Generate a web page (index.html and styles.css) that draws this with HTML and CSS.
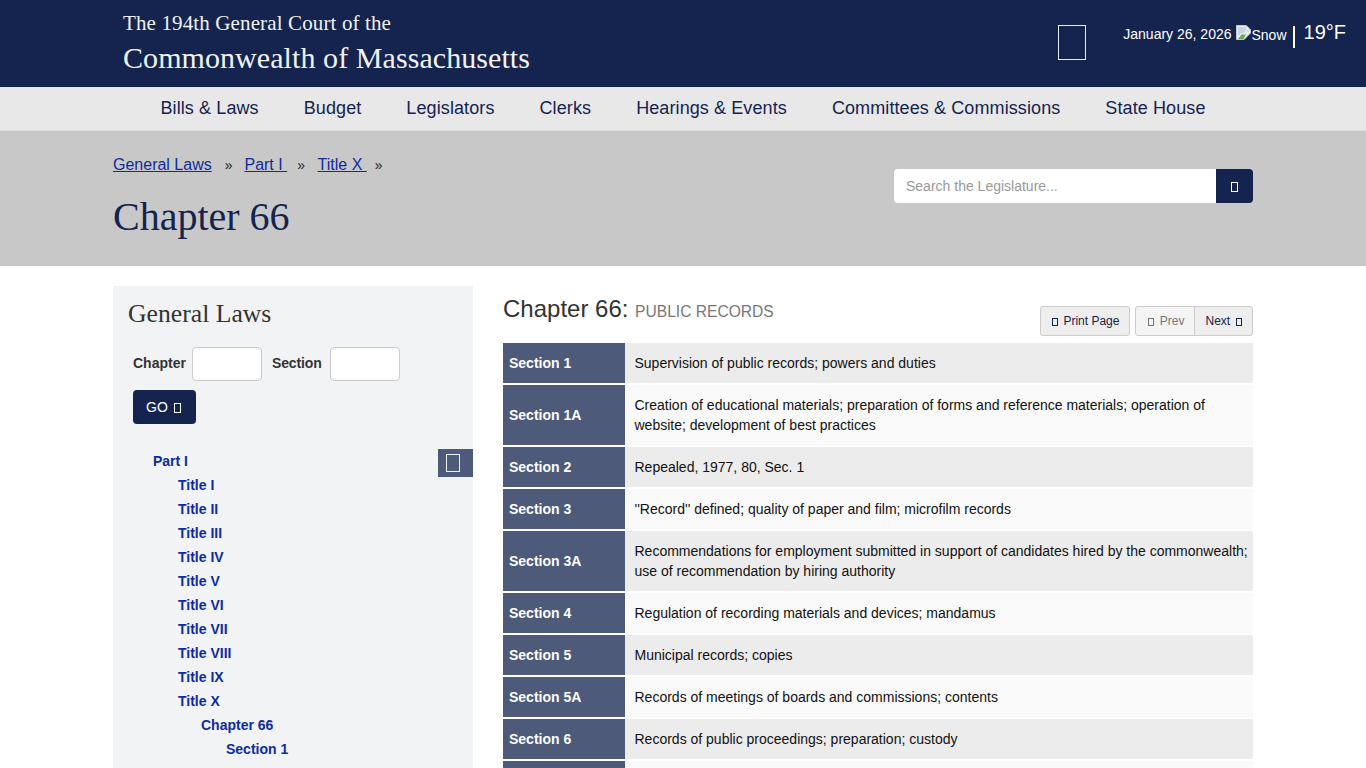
FILE: index.html
```html
<!DOCTYPE html>
<html lang="en">

<head>
    <meta charset="UTF-8">
    <meta name="viewport" content="width=device-width, initial-scale=1.0">
    <title>General Laws - Chapter 66</title>
    <link rel="stylesheet" href="styles.css">
</head>

<body>
    <!-- Header -->
    <header class="top">
        <div class="brand">
            <div class="brand-small">The 194th General Court of the</div>
            <div class="brand-big">Commonwealth of Massachusetts</div>
        </div>
        <div class="top-right">
            <span class="box box-menu"></span>
            <div class="weather">
                <span class="date">January 26, 2026</span>
                <svg class="broken-img" width="16" height="16" viewBox="0 0 16 16">
                    <path d="M.5 .5h9.500l4.500 4.500v3l-6.500 6.500H.5z" fill="#eef1f4" stroke="#c3c7cc"/>
                    <path d="M2 2h7v4h4v1.500L10 6 7 9 5 8l-3 3z" fill="#c4d3ea"/>
                    <path d="M2 14l4-5 2 1 2.500-2L7.500 14z" fill="#6aa84a"/>
                    <path d="M10 .5V5h4.500z" fill="#fff" stroke="#c3c7cc"/>
                </svg><span class="snow">Snow</span>
                <span class="divider"></span>
                <span class="temp">19°F</span>
            </div>
        </div>
    </header>

    <!-- Main nav -->
    <nav class="mainnav">
        <a href="#">Bills &amp; Laws</a>
        <a href="#">Budget</a>
        <a href="#">Legislators</a>
        <a href="#">Clerks</a>
        <a href="#">Hearings &amp; Events</a>
        <a href="#">Committees &amp; Commissions</a>
        <a href="#">State House</a>
    </nav>

    <!-- Title band -->
    <div class="band">
        <div class="band-inner">
            <div>
                <div class="crumbs">
                    <a href="#" class="crumb-first">General Laws</a><span class="sep sep-first">»</span>
                    <a href="#">Part I&nbsp;</a><span class="sep">»</span>
                    <a href="#">Title X&nbsp;</a><span class="sep sep-last">»</span>
                </div>
                <h1>Chapter 66</h1>
            </div>
            <form class="search">
                <input type="text" placeholder="Search the Legislature...">
                <button type="button"><span class="box"></span></button>
            </form>
        </div>
    </div>

    <div class="content">
        <!-- Sidebar -->
        <aside class="side">
            <h2>General Laws</h2>
            <form class="jump">
                <label for="chapter">Chapter</label>
                <input type="text" id="chapter">
                <label for="section" class="label-section">Section</label>
                <input type="text" id="section">
                <button type="button" class="go">GO <span class="box"></span></button>
            </form>
            <div class="tree-toggle"><span class="box"></span></div>
            <ul class="tree">
                <li><a href="#">Part I</a>
                    <ul>
                        <li><a href="#">Title I</a></li>
                        <li><a href="#">Title II</a></li>
                        <li><a href="#">Title III</a></li>
                        <li><a href="#">Title IV</a></li>
                        <li><a href="#">Title V</a></li>
                        <li><a href="#">Title VI</a></li>
                        <li><a href="#">Title VII</a></li>
                        <li><a href="#">Title VIII</a></li>
                        <li><a href="#">Title IX</a></li>
                        <li><a href="#">Title X</a>
                            <ul class="chapters">
                                <li><a href="#">Chapter 66</a>
                                    <ul>
                                        <li><a href="#">Section 1</a></li>
                                    </ul>
                                </li>
                            </ul>
                        </li>
                    </ul>
                </li>
            </ul>
        </aside>

        <!-- Section list -->
        <main class="main">
            <div class="main-head">
                <h2>Chapter 66: <small>PUBLIC RECORDS</small></h2>
                <div class="tools">
                    <a href="#" class="tool print"><span class="box"></span> Print Page</a>
                    <div class="pager">
                        <a href="#" class="tool prev off"><span class="box"></span> Prev</a>
                        <a href="#" class="tool next">Next <span class="box"></span></a>
                    </div>
                </div>
            </div>
            <div class="rows">
                <a href="#" class="row"><span class="sec">Section 1</span><span class="desc">Supervision of public records; powers and duties</span></a>
                <a href="#" class="row"><span class="sec">Section 1A</span><span class="desc">Creation of educational materials; preparation of forms and reference materials; operation of website; development of best practices</span></a>
                <a href="#" class="row"><span class="sec">Section 2</span><span class="desc">Repealed, 1977, 80, Sec. 1</span></a>
                <a href="#" class="row"><span class="sec">Section 3</span><span class="desc">''Record'' defined; quality of paper and film; microfilm records</span></a>
                <a href="#" class="row"><span class="sec">Section 3A</span><span class="desc">Recommendations for employment submitted in support of candidates hired by the commonwealth; use of recommendation by hiring authority</span></a>
                <a href="#" class="row"><span class="sec">Section 4</span><span class="desc">Regulation of recording materials and devices; mandamus</span></a>
                <a href="#" class="row"><span class="sec">Section 5</span><span class="desc">Municipal records; copies</span></a>
                <a href="#" class="row"><span class="sec">Section 5A</span><span class="desc">Records of meetings of boards and commissions; contents</span></a>
                <a href="#" class="row"><span class="sec">Section 6</span><span class="desc">Records of public proceedings; preparation; custody</span></a>
                <a href="#" class="row"><span class="sec"></span><span class="desc"></span></a>
            </div>
        </main>
    </div>
</body>

</html>
```

FILE: styles.css
```css
body, html {
    margin: 0;
    font-family: "Liberation Sans", Arial, sans-serif;
    background-color: #fff;
    color: #333;
}

html {
    height: 100%;
    overflow: hidden;
}

a {
    text-decoration: none;
}

/* Missing icon font box */
.box {
    display: inline-block;
    box-sizing: border-box;
    width: 7px;
    height: 10px;
    border: 1px solid currentColor;
    vertical-align: -1px;
}

/* Header */
.top {
    display: flex;
    justify-content: space-between;
    height: 87px;
    padding: 0 20px 0 123px;
    background-color: #14244f;
    color: #fff;
}

.brand {
    font-family: "Liberation Serif", serif;
    color: #f2f2f2;
}

.brand-small {
    margin-top: 11px;
    font-size: 21px;
    line-height: 25px;
    letter-spacing: 0.13px;
}

.brand-big {
    margin-top: 5px;
    font-size: 30px;
    line-height: 34px;
    letter-spacing: 0.07px;
}

.top-right {
    display: flex;
    align-items: flex-start;
}

.box-menu {
    width: 28px;
    height: 35px;
    margin: 25px 37px 0 0;
    color: #e8ecf4;
}

.weather {
    display: flex;
    align-items: flex-start;
    padding-top: 17px;
    font-size: 14px;
    line-height: 20px;
}

.date {
    margin-top: 7px;
    margin-right: 4px;
}

.broken-img {
    margin-top: 8px;
}

.snow {
    margin-top: 8px;
    margin-right: 6px;
}

.divider {
    width: 2px;
    height: 22px;
    margin: 9px 9px 0 0;
    background-color: #fff;
}

.temp {
    margin-top: 4px;
    font-size: 20px;
    line-height: 22px;
}

/* Main nav */
.mainnav {
    display: flex;
    justify-content: center;
    gap: 45px;
    height: 44px;
    background-color: #e8e8e8;
    border-bottom: 1px solid #dcdcdc;
    box-sizing: border-box;
}

.mainnav a {
    font-size: 18px;
    line-height: 42px;
    letter-spacing: 0.1px;
    color: #14244f;
}

/* Title band */
.band {
    height: 135px;
    background-color: #c8c8c8;
}

.band-inner {
    display: flex;
    justify-content: space-between;
    width: 1140px;
    margin: 0 auto;
}

.crumbs {
    padding-top: 24px;
    font-size: 16px;
    line-height: 20px;
}

.crumbs a {
    color: #0f2c9c;
    text-decoration: underline;
}

.crumbs .crumb-first {
    margin-right: 3px;
}

.sep {
    margin: 0 8.5px 0 10px;
    color: #222;
    font-size: 14px;
}

.sep-first {
    margin-right: 7.5px;
}

.sep-last {
    margin-left: 8px;
}

h1 {
    margin: 20px 0 0;
    font-family: "Liberation Serif", serif;
    font-size: 40px;
    line-height: 44px;
    font-weight: normal;
    color: #14244f;
}

.search {
    display: flex;
    width: 359px;
    height: 34px;
    margin-top: 38px;
}

.search input {
    flex: 1;
    min-width: 0;
    box-sizing: border-box;
    padding: 0 12px;
    border: none;
    border-radius: 4px 0 0 4px;
    font: 14px "Liberation Sans", Arial, sans-serif;
}

.search input::placeholder {
    color: #999;
}

.search button {
    width: 37px;
    padding: 0;
    border: none;
    border-radius: 0 4px 4px 0;
    background-color: #14244f;
    color: #fff;
}

/* Content */
.content {
    display: flex;
    gap: 30px;
    width: 1140px;
    margin: 20px auto 0;
}

/* Sidebar */
.side {
    position: relative;
    flex: none;
    box-sizing: border-box;
    width: 360px;
    padding: 15px 15px 30px;
    background-color: #f1f3f5;
}

.side h2 {
    margin: 0;
    font-family: "Liberation Serif", serif;
    font-size: 25.7px;
    line-height: 26px;
    font-weight: normal;
    color: #333;
}

.jump {
    display: flex;
    flex-wrap: wrap;
    align-items: center;
    width: 300px;
    margin: 20px 0 0 5px;
}

.jump label {
    margin-right: 6px;
    padding-bottom: 2px;
    font-size: 14px;
    font-weight: bold;
}

.jump .label-section {
    margin-left: 10px;
    margin-right: 8px;
    letter-spacing: -0.1px;
}

.jump input {
    box-sizing: border-box;
    width: 70px;
    height: 34px;
    border: 1px solid #ccc;
    border-radius: 4px;
    background-color: #fff;
}

.go {
    width: 63px;
    height: 34px;
    margin-top: 9px;
    padding: 0 0 0 13px;
    border: none;
    border-radius: 4px;
    background-color: #14244f;
    color: #fff;
    font: 14px "Liberation Sans", Arial, sans-serif;
    text-align: left;
}

.go .box {
    margin-left: 2px;
}

.tree-toggle {
    position: absolute;
    top: 163px;
    right: 0;
    box-sizing: border-box;
    width: 35px;
    height: 28px;
    padding: 5px 0 0 8px;
    background-color: #4d5a7a;
    color: #eef0f5;
}

.tree-toggle .box {
    display: block;
    width: 14px;
    height: 18px;
}

.tree {
    margin: 25px 0 0;
    padding: 0 0 0 25px;
    list-style: none;
    font-size: 14px;
    font-weight: bold;
    line-height: 24px;
}

.tree ul {
    margin: 0;
    padding: 0 0 0 25px;
    list-style: none;
}

.tree .chapters {
    padding-left: 23px;
}

.tree a {
    color: #0f2c9c;
}

/* Section list */
.main {
    flex: 1;
    min-width: 0;
}

.main-head {
    display: flex;
    justify-content: space-between;
    height: 57px;
}

.main-head h2 {
    margin: 9px 0 0;
    font-size: 24px;
    line-height: 28px;
    font-weight: normal;
    color: #333;
}

.main-head small {
    font-size: 15.6px;
    color: #777;
}

.tools {
    display: flex;
    gap: 5px;
    margin-top: 20px;
}

.pager {
    display: flex;
}

.tool {
    box-sizing: border-box;
    height: 30px;
    border: 1px solid #ccc;
    border-radius: 3px;
    background-color: #eee;
    color: #14244f;
    font-size: 12px;
    line-height: 28px;
}

.tool .box {
    width: 6px;
    height: 8px;
    vertical-align: -1px;
}

.print {
    padding: 0 10px 0 11px;
}

.print .box,
.prev .box {
    margin-right: 2px;
}

.prev {
    padding: 0 10px 0 12px;
    border-radius: 3px 0 0 3px;
}

.next {
    margin-left: -1px;
    padding: 0 10.5px 0 10px;
    border-radius: 0 3px 3px 0;
}

.next .box {
    margin-left: 2px;
}

.tool.off {
    color: #777;
    background-color: #f4f4f4;
}

.rows {
    display: flex;
    flex-direction: column;
    gap: 2px;
}

.row {
    display: flex;
    min-height: 40px;
    background-color: #fafafa;
    color: #111;
    font-size: 14px;
    line-height: 20px;
}

.row:nth-child(odd) {
    background-color: #ececec;
}

.sec {
    display: flex;
    align-items: center;
    flex: none;
    box-sizing: border-box;
    width: 122px;
    padding-left: 6px;
    background-color: #4d5a7a;
    color: #fff;
    font-weight: bold;
}

.desc {
    align-self: center;
    padding: 10px 5px 10px 9.5px;
}
```
